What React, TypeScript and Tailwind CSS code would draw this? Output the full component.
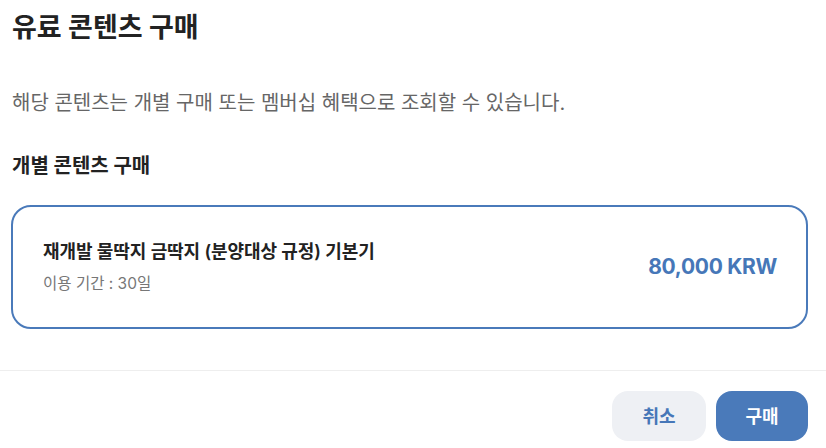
import React from 'react';

const font = { fontFamily: 'Inter, "Noto Sans CJK KR", sans-serif' };

const App: React.FC = () => {
  return (
    <div className="w-[826px] h-[448px] bg-white overflow-hidden flex flex-col" style={font}>
      <div className="pl-3 pr-[18px]">
        <h2 className="pt-[9px] text-[27px] leading-[38px] font-bold text-[#222]">유료 콘텐츠 구매</h2>
        <p className="mt-[42px] text-[20px] leading-[28px] text-[#666]">
          해당 콘텐츠는 개별 구매 또는 멤버십 혜택으로 조회할 수 있습니다.
        </p>
        <h3 className="mt-[35px] text-[20px] leading-[28px] font-bold text-[#222]">개별 콘텐츠 구매</h3>
        <div className="mt-[25px] ml-[-1px] h-[124px] border-2 border-[#4a7aba] rounded-[20px] flex items-center justify-between pl-[30px] pr-[29px]">
          <div className="flex flex-col">
            <span className="text-[18px] leading-[24px] font-semibold text-[#222] tracking-[-0.1px]">
              재개발 물딱지 금딱지 (분양대상 규정) 기본기
            </span>
            <span className="mt-[10px] text-[15.5px] leading-[20px] text-[#777]">이용 기간 : 30일</span>
          </div>
          <span className="text-[21px] font-bold text-[#4677b8] tracking-[-0.3px]">80,000 KRW</span>
        </div>
      </div>
      <div className="mt-[41px] border-t border-[#eeeeee]" />
      <div className="flex justify-end gap-[10px] pr-[18px] pt-[20px]">
        <button className="w-[94px] h-[50px] rounded-[16px] bg-[#eef0f4] text-[#4677b8] text-[18px] font-bold">취소</button>
        <button className="w-[92px] h-[50px] rounded-[16px] bg-[#4a7aba] text-white text-[18px] font-bold">구매</button>
      </div>
    </div>
  );
};

export default App;
